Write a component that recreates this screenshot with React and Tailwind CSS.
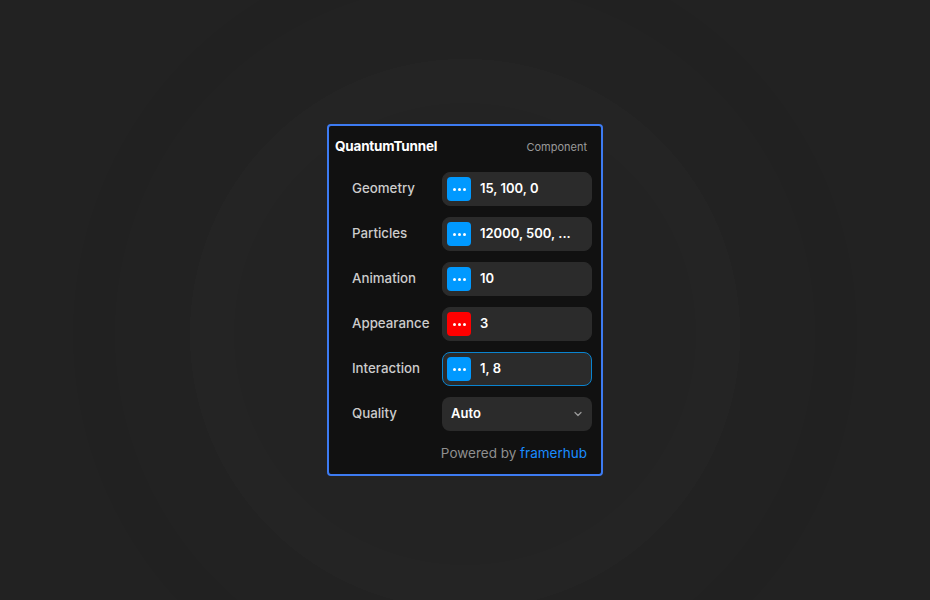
import { ChevronDown } from 'lucide-react';

const rows = [
    { label: 'Geometry', value: '15, 100, 0', color: 'bg-[#0099ff]' },
    { label: 'Particles', value: '12000, 500, ...', color: 'bg-[#0099ff]' },
    { label: 'Animation', value: '10', color: 'bg-[#0099ff]' },
    { label: 'Appearance', value: '3', color: 'bg-[#ff0000]' },
    { label: 'Interaction', value: '1, 8', color: 'bg-[#0099ff]', focused: true },
];

function Dots() {
    return (
        <div className="flex items-center gap-[2px]">
            <span className="w-[3px] h-[3px] rounded-full bg-white" />
            <span className="w-[3px] h-[3px] rounded-full bg-white" />
            <span className="w-[3px] h-[3px] rounded-full bg-white" />
        </div>
    );
}

function Row({ label, value, color, focused }) {
    return (
        <div className="flex items-center h-[34px]">
            <div className="w-[90px] text-[13.3px] font-medium text-[#cccccc]">{label}</div>
            <div
                className={`flex-1 h-[34px] rounded-[8px] bg-[#2b2b2b] flex items-center pl-[4px] gap-[9px] ${
                    focused ? 'border border-[#0a84d0]' : 'border border-[#2b2b2b]'
                }`}
            >
                <div className={`w-[24px] h-[24px] rounded-[4px] ${color} flex items-center justify-center`}>
                    <Dots />
                </div>
                <span className="text-[13px] font-semibold text-white">{value}</span>
            </div>
        </div>
    );
}

export default function App() {
    return (
        <div
            className="w-full h-screen flex items-center justify-center bg-[#212121] bg-[radial-gradient(circle_at_465px_334px,#232323_0,#232323_231px,#242424_231px,#242424_275px,#222222_275px,#222222_350px,#212121_350px,#212121_392px,#222222_392px)]"
            style={{ fontFamily: 'Inter, "Noto Sans", sans-serif' }}
        >
            <div className="w-[276px] h-[352px] border-2 border-[#3d7bf2] rounded-[4px] bg-[#111111] flex flex-col">
                <div className="h-[40px] flex items-center justify-between pl-[6px] pr-[14px]">
                    <span className="text-[13.5px] font-bold text-white tracking-[-0.2px] mt-[1px]">QuantumTunnel</span>
                    <span className="text-[11px] text-[#9a9a9a] mt-[3px]">Component</span>
                </div>
                <div className="mt-[6px] flex flex-col gap-[11px] pl-[23px] pr-[9px]">
                    {rows.map((r) => (
                        <Row key={r.label} {...r} />
                    ))}
                    <div className="flex items-center h-[34px]">
                        <div className="w-[90px] text-[13.3px] font-medium text-[#cccccc]">Quality</div>
                        <div className="flex-1 h-[34px] rounded-[8px] bg-[#2b2b2b] flex items-center justify-between pl-[9px] pr-[8px]">
                            <span className="text-[13px] font-semibold text-white">Auto</span>
                            <ChevronDown size={12} strokeWidth={2.5} className="text-[#9a9a9a]" />
                        </div>
                    </div>
                </div>
                <div className="mt-[12px] pr-[14px] text-right text-[13.5px]">
                    <span className="text-[#8f8f8f]">Powered by </span>
                    <span className="text-[#1a8cff]">framerhub</span>
                </div>
            </div>
        </div>
    );
}
